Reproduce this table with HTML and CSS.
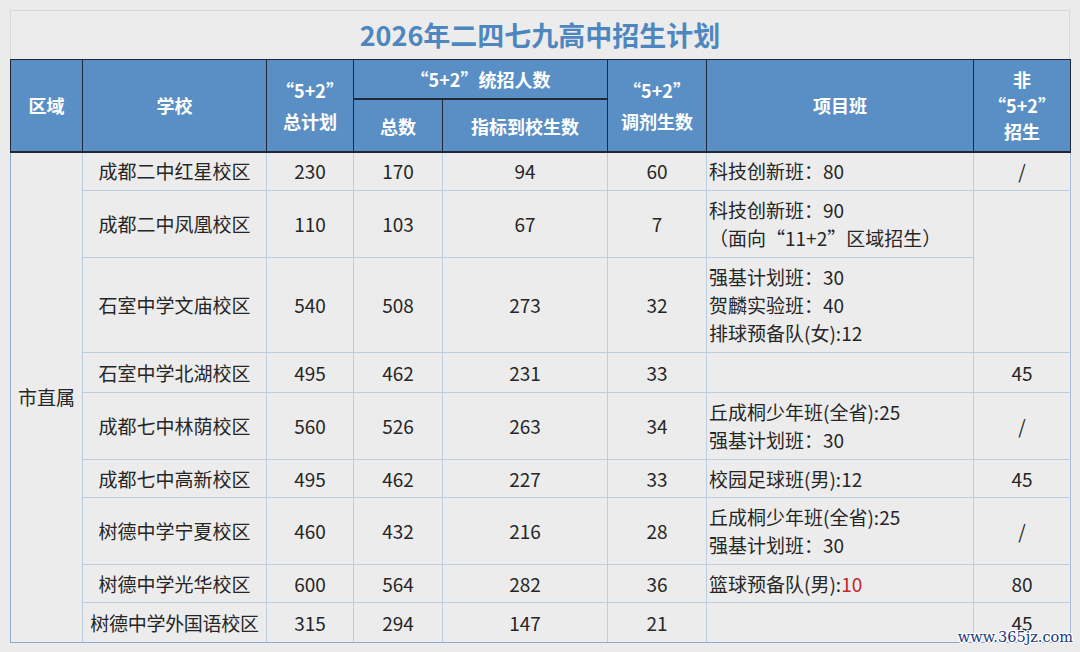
FILE: index.html
```html
<!DOCTYPE html>
<html lang="zh-CN">
<head>
<meta charset="utf-8">
<title>2026年二四七九高中招生计划</title>
<link rel="stylesheet" href="styles.css">
</head>
<body>
<div class="sheet">
  <div class="title">2026年二四七九高中招生计划</div>
  <table class="plan">
    <colgroup>
      <col class="c-area"><col class="c-school"><col class="c-total"><col class="c-sum"><col class="c-quota"><col class="c-adj"><col class="c-proj"><col class="c-non">
    </colgroup>
    <thead>
      <tr class="h1">
        <th rowspan="2">区域</th>
        <th rowspan="2">学校</th>
        <th rowspan="2" class="two">“5+2”<br>总计划</th>
        <th colspan="2">“5+2”统招人数</th>
        <th rowspan="2" class="two">“5+2”<br>调剂生数</th>
        <th rowspan="2">项目班</th>
        <th rowspan="2" class="three">非<br>“5+2”<br>招生</th>
      </tr>
      <tr class="h2">
        <th>总数</th>
        <th>指标到校生数</th>
      </tr>
    </thead>
    <tbody>
      <tr class="r39">
        <td rowspan="9" class="area">市直属</td>
        <td>成都二中红星校区</td><td>230</td><td>170</td><td>94</td><td>60</td>
        <td class="proj">科技创新班：80</td><td>/</td>
      </tr>
      <tr class="r67">
        <td>成都二中凤凰校区</td><td>110</td><td>103</td><td>67</td><td>7</td>
        <td class="proj">科技创新班：90<br>（面向“11+2”区域招生）</td><td rowspan="2"></td>
      </tr>
      <tr class="r95">
        <td>石室中学文庙校区</td><td>540</td><td>508</td><td>273</td><td>32</td>
        <td class="proj">强基计划班：30<br>贺麟实验班：40<br>排球预备队(女):12</td>
      </tr>
      <tr class="r40">
        <td>石室中学北湖校区</td><td>495</td><td>462</td><td>231</td><td>33</td>
        <td class="proj"></td><td>45</td>
      </tr>
      <tr class="r67">
        <td>成都七中林荫校区</td><td>560</td><td>526</td><td>263</td><td>34</td>
        <td class="proj">丘成桐少年班(全省):25<br>强基计划班：30</td><td>/</td>
      </tr>
      <tr class="r38">
        <td>成都七中高新校区</td><td>495</td><td>462</td><td>227</td><td>33</td>
        <td class="proj">校园足球班(男):12</td><td>45</td>
      </tr>
      <tr class="r67">
        <td>树德中学宁夏校区</td><td>460</td><td>432</td><td>216</td><td>28</td>
        <td class="proj">丘成桐少年班(全省):25<br>强基计划班：30</td><td>/</td>
      </tr>
      <tr class="r38">
        <td>树德中学光华校区</td><td>600</td><td>564</td><td>282</td><td>36</td>
        <td class="proj">篮球预备队(男):<span class="red">10</span></td><td>80</td>
      </tr>
      <tr class="r40">
        <td class="tight">树德中学外国语校区</td><td>315</td><td>294</td><td>147</td><td>21</td>
        <td class="proj"></td><td>45</td>
      </tr>
    </tbody>
  </table>
  <div class="watermark">www.365jz.com</div>
</div>
</body>
</html>
```

FILE: styles.css
```css
html, body {
  margin: 0;
  padding: 0;
  background: #ebebeb;
}
body {
  padding: 10px;
  font-family: "Noto Sans CJK SC", "Noto Sans", sans-serif;
  color: #262626;
}
.sheet {
  position: relative;
  width: 1060px;
}
.title {
  height: 48px;
  border: 1px solid #d8d8d8;
  border-bottom: none;
  background: #ececec;
  color: #4e87c0;
  font-size: 27px;
  font-weight: 700;
  line-height: 48px;
  text-align: center;
}
.plan {
  width: 1060px;
  border-collapse: collapse;
  table-layout: fixed;
}
.c-area { width: 72px; }
.c-school { width: 184px; }
.c-total { width: 87px; }
.c-sum { width: 89px; }
.c-quota { width: 165px; }
.c-adj { width: 99px; }
.c-proj { width: 267px; }
.c-non { width: 97px; }

.plan th {
  background: #5a8fc6;
  color: #ffffff;
  font-size: 18px;
  font-weight: 700;
  border: 1px solid #1e2836;
  border-bottom-width: 2px;
  padding: 0;
  line-height: 24px;
}
.plan th.two { line-height: 31px; padding-top: 2px; }
.plan th.three { line-height: 26px; }
.h1 { height: 39px; }
.h2 { height: 53px; }
.h2 th { padding-top: 2px; }

.plan td {
  background: #ececec;
  border: 1px solid #bccddf;
  font-size: 19px;
  line-height: 28px;
  text-align: center;
  vertical-align: middle;
  padding: 0;
}
.plan tbody tr:last-child td { border-bottom-color: #8eaacb; }
.plan td.area { border-left-color: #8eaacb; border-bottom-color: #8eaacb; }
.plan tbody td:last-child { border-right-color: #a8bed6; }
.plan td.proj {
  text-align: left;
  padding-left: 2px;
}
.plan td.tight { letter-spacing: -0.3px; }
.red { color: #c3262b; }

.r38 { height: 38px; }
.r39 { height: 39px; }
.r40 { height: 40px; }
.r67 { height: 67px; }
.r95 { height: 95px; }

.watermark {
  position: absolute;
  right: -3px;
  bottom: -3px;
  font-family: "DejaVu Serif", "Liberation Serif", serif;
  font-size: 14.5px;
  line-height: 18px;
  color: #173a80;
  text-shadow: -1px 0 #fff, 1px 0 #fff, 0 -1px #fff, 0 1px #fff, 1px 1px #fff, -1px -1px #fff, 1px -1px #fff, -1px 1px #fff;
}
```
